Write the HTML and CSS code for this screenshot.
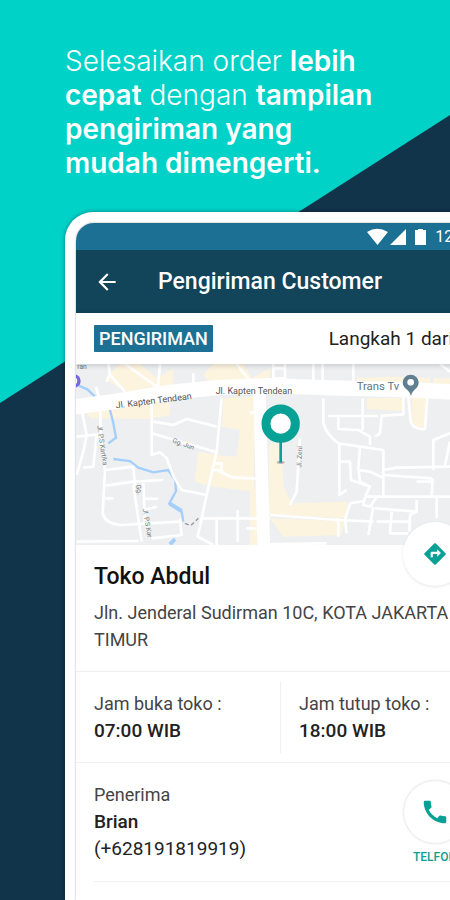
FILE: index.html
```
<!DOCTYPE html>
<html lang="id">
<head>
  <meta charset="UTF-8" />
  <meta name="viewport" content="width=device-width, initial-scale=1.0"/>
  <title>Pengiriman Customer</title>
  <link rel="stylesheet" href="styles.css">
</head>
<body>

  <main class="promo">
    <div class="backdrop"></div>

    <h1 class="headline">
      Selesaikan order <strong>lebih<br>cepat</strong> dengan <strong>tampilan<br>pengiriman yang<br>mudah dimengerti.</strong>
    </h1>

    <div class="phone">
      <div class="screen">

        <div class="status-bar">
          <svg class="status-icons" viewBox="0 0 60 18" aria-hidden="true">
            <path d="M0 4 Q10-2.500 21 4 L10.500 17Z"/>
            <path d="M39 1V17H23Z"/>
            <path d="M51 1h5v1h3v15H48V2h3Z"/>
          </svg>
          <span>12:30</span>
        </div>

        <header class="app-bar">
          <button class="back" type="button" aria-label="Kembali">
            <svg viewBox="0 0 24 24"><path d="M20 11H7.830l5.590-5.590L12 4l-8 8 8 8 1.410-1.410L7.830 13H20z"/></svg>
          </button>
          <h2>Pengiriman Customer</h2>
        </header>

        <div class="step-row">
          <span class="badge">PENGIRIMAN</span>
          <span>Langkah 1 dari</span>
        </div>

        <div class="map">
          <svg viewBox="18 27 1302 543" preserveAspectRatio="xMinYMin slice" role="img" aria-label="Peta lokasi toko">
            <rect class="land" x="0" y="0" width="1400" height="600"/>

            <!-- built-up areas -->
            <g class="area">
              <path d="M105 70 150 27H210L262 70 310 40 310 90 170 115Z"/>
              <path d="M50 170 240 140 300 145V180L240 192 60 190Z"/>
              <path d="M430 27H520L545 70 600 40V85L420 88 400 60Z"/>
              <path d="M462 130 552 125V375L435 350 430 395 375 380 385 290 440 300 500 305 510 225 455 215Z"/>
              <path d="M435 350 552 372V410L430 395Z"/>
              <path d="M540 400h22v170h-22z"/>
              <path d="M598 265h35l8 130 25 50 165-5v50l-235-12Z"/>
              <path d="M600 490 825 498 815 540 640 545Z"/>
              <path d="M860 70 960 65 1080 68V100L860 105Z"/>
              <path d="M890 130 1000 128V168L890 162Z"/>
              <path d="M1025 120h45v100l-28 5-17-30Z"/>
              <path d="M1090 70h230v50h-230z"/>
            </g>

            <!-- river -->
            <g class="river">
              <path d="M26 92 52 103 75 125M120 165 130 205 138 248 115 265M130 312 180 318 205 338 250 352 295 345 315 375 318 408 298 445 335 470 340 500"/>
              <path class="wide" d="M298 445 335 468M300 568 315 552"/>
            </g>

            <!-- small streets -->
            <g class="street">
              <path d="M78 95 90 140 92 240 105 350 98 475Q105 505 150 510L330 500M35 165 50 240 40 290 20 360M20 245 85 238M80 240 70 335 40 338"/>
              <path d="M245 130V300L270 292 290 310 312 368 335 405 410 420M250 200 310 210 350 192 440 215M245 235 440 292M270 27 262 120"/>
              <path d="M115 27 120 60 165 110M165 27 260 95M110 80 120 55M370 55V90M500 27 545 85"/>
              <path d="M455 130 440 290 410 420 383 545 430 570M440 345 490 368 552 370M430 325h25v20h-25M395 490H555M440 490V570M503 465V560"/>
              <path d="M108 345 190 335 195 390M108 392 190 380 280 375M105 430h25M220 385 225 510M225 430 265 432M225 465 260 455M20 560 205 558M190 390 215 560M245 550 335 540 330 490"/>
              <path d="M540 490h60M530 520h30M540 175 552 170"/>
            </g>

            <g class="street" transform="translate(540 0)">
              <path d="M70 27v50M105 27v50M70 40h35M70 70h35M190 27v60M218 27v58M310 27v55M570 27 600 50"/>
              <path d="M220 130V205Q230 240 265 265L400 285V425M235 183H385M265 183V222L325 225 360 245V270M338 130V225"/>
              <path d="M460 125V178L395 182 390 235 375 245M475 125 482 200Q490 225 525 222L532 130"/>
              <path d="M268 268V420L290 405M330 272 325 340 330 380 360 395 345 425M268 320H300L303 375 360 395M325 345 360 350 398 368"/>
              <path d="M400 345 440 338 600 335M400 360 545 370M548 370 545 425M550 345V255L600 235M600 260 585 330M500 380h45"/>
              <path d="M345 425H760M345 425 340 450 360 455 380 425M300 445 340 438M300 445 285 495 290 535M370 455 355 540M375 460 500 470M500 435 500 470 480 480 478 530M425 470 420 535 475 535M380 500H480M560 425V490"/>
              <path d="M150 250 140 410 120 450M60 480 265 495 370 500M0 370H30M265 490V545M60 567 230 565"/>
            </g>

            <!-- main roads -->
            <path class="road" d="M0 158 130 140 300 112 440 98 600 92 760 98 1000 104 1320 118"/>
            <path class="road wide-road" d="M568 100 575 350 582 600"/>
            <path class="rail" d="M345 505 362 512 385 490"/>
            <circle class="poi" cx="12" cy="78" r="20"/>
            <circle class="pin-hole" cx="12" cy="78" r="10"/>

            <g class="street-name">
              <text class="minor" x="22" y="42">ran</text>
              <text transform="translate(138 160) rotate(-7)">Jl. Kapten Tendean</text>
              <text x="437" y="116">Jl. Kapten Tendean</text>
              <text class="minor" transform="translate(82 212) rotate(82)">Jl. P.S Kartika</text>
              <text class="minor" transform="translate(198 390) rotate(80)">Gg.</text>
              <text class="minor" transform="translate(218 462) rotate(80)">Jl. P.S Kar</text>
              <text class="minor" transform="translate(306 262) rotate(20)">Gg. Jun</text>
              <text class="minor" transform="translate(694 338) rotate(-88)">Jl. Zeni</text>
              <text class="place" x="860" y="105">Trans Tv</text>
            </g>

            <!-- Trans Tv pin -->
            <path class="pin-small" d="M1023 123C1018 102 998 102 998 82a24 23 0 0 1 48 0C1046 102 1028 102 1023 123Z"/>
            <circle class="pin-hole" cx="1022" cy="82" r="10"/>

            <!-- store marker -->
            <ellipse class="pin-shadow" cx="632" cy="322" rx="12" ry="5"/>
            <path class="pin-stem" d="M632 255V323"/>
            <circle class="pin" cx="632" cy="206" r="44"/>
          </svg>
          <button class="round directions" type="button" aria-label="Petunjuk arah">
            <svg viewBox="0 0 24 24"><path d="M21.710 11.290l-9-9a1 1 0 0 0-1.410 0l-9 9a1 1 0 0 0 0 1.410l9 9c.390.390 1.020.390 1.410 0l9-9a1 1 0 0 0 0-1.410zM14 14.500V12h-4v3H8v-4c0-.550.450-1 1-1h5V7.500l3.500 3.500-3.500 3.500z"/></svg>
          </button>
        </div>

        <section class="store">
          <h3>Toko Abdul</h3>
          <p>Jln. Jenderal Sudirman 10C, KOTA JAKARTA TIMUR</p>
        </section>

        <section class="hours">
          <div>
            <p>Jam buka toko :</p>
            <p class="value">07:00 WIB</p>
          </div>
          <div>
            <p>Jam tutup toko :</p>
            <p class="value">18:00 WIB</p>
          </div>
        </section>

        <section class="receiver">
          <div>
            <p>Penerima</p>
            <p class="value">Brian</p>
            <p class="number">(+628191819919)</p>
          </div>
          <a class="call" href="tel:+628191819919">
            <span class="round">
              <svg viewBox="0 0 24 24"><path d="M20.010 15.380c-1.230 0-2.420-.200-3.530-.560a.977.977 0 0 0-1.010.240l-1.570 1.970c-2.830-1.350-5.480-3.900-6.890-6.830l1.950-1.660c.270-.280.350-.670.240-1.020-.370-1.110-.560-2.300-.560-3.530 0-.540-.450-.990-.990-.990H4.190C3.650 3 3 3.240 3 3.990 3 13.280 10.730 21 20.010 21c.710 0 .990-.630.990-1.180v-3.450c0-.540-.450-.990-.990-.990z"/></svg>
            </span>
            TELFON
          </a>
        </section>

      </div>
    </div>
  </main>

</body>
</html>
```

FILE: styles.css
```
* {
  box-sizing: border-box;
}

body {
  margin: 0;
  background: #12344b;
  color: #444;
  font-family: Roboto, sans-serif;
  font-size: 18px;
  line-height: 27px;
}

h1, h2, h3, p {
  margin: 0;
}

button {
  padding: 0;
  border: 0;
  background: none;
  cursor: pointer;
}

.promo {
  position: relative;
  display: flex;
  flex-direction: column;
  min-height: 100vh;
  padding: 44px 0 0 65px;
  overflow: hidden;
}

.backdrop {
  position: absolute;
  inset: 0;
  background: #00d2c8;
  clip-path: polygon(0 0, 100% 0, 100% 115px, 0 403px);
}

.headline {
  position: relative;
  color: #fff;
  font-family: Inter, sans-serif;
  font-size: 28px;
  font-weight: 300;
  line-height: 34px;
}

.headline strong {
  font-weight: 600;
}

/* the phone runs off the right and bottom edges */
.phone {
  position: relative;
  display: flex;
  flex: 1;
  margin: 32px -60px 0 0;
  padding: 11px 11px 0;
  border-radius: 28px 28px 0 0;
  background: #fff;
  box-shadow: 0 0 4px rgba(0, 0, 0, 0.4);
}

.screen {
  flex: 1;
  border-radius: 18px 18px 0 0;
  background: #fff;
  box-shadow: 0 0 2px rgba(0, 0, 0, 0.4);
  overflow: hidden;
}

.status-bar {
  display: flex;
  align-items: center;
  justify-content: flex-end;
  gap: 8px;
  height: 27px;
  padding-right: 24px;
  background: #1b7094;
  color: #fff;
  font-size: 16px;
}

.status-icons {
  width: 60px;
  height: 18px;
  fill: #fff;
}

.app-bar {
  display: flex;
  align-items: center;
  gap: 38px;
  height: 63px;
  padding: 0 18px;
  background: #12445a;
  color: #fff;
}

.app-bar h2 {
  font-size: 23px;
  font-weight: 500;
}

.back svg {
  display: block;
  width: 26px;
  height: 26px;
  fill: #fff;
}

.step-row {
  position: relative;
  z-index: 1;
  display: flex;
  align-items: center;
  justify-content: space-between;
  height: 51px;
  padding: 0 46px 0 18px;
  box-shadow: 0 1px 6px rgba(0, 0, 0, 0.2);
  color: #222;
  font-size: 19px;
}

.badge {
  padding: 0 5px;
  border-radius: 1px;
  background: #1b7094;
  color: #fff;
  font-size: 18px;
  font-weight: 500;
}

.map {
  position: relative;
}

.map > svg {
  display: block;
  width: 100%;
  height: 181px;
}

.land { fill: #edeff1; }
.area { fill: #fcf4df; }
.river { fill: none; stroke: #a5cffa; stroke-width: 7; }
.river .wide { stroke-width: 12; }
.street { fill: none; stroke: #fff; stroke-width: 8; stroke-linejoin: round; }
.road { fill: none; stroke: #fff; stroke-width: 46; }
.wide-road { stroke-width: 38; }
.rail { fill: none; stroke: #999; stroke-width: 4; stroke-dasharray: 12 8; }
.poi { fill: #7568d8; }
.street-name { fill: #555; font-size: 27px; }
.street-name .minor { fill: #777; font-size: 20px; }
.street-name .place { fill: #5f7485; font-size: 34px; }
.pin-small { fill: #607f92; }
.pin-hole { fill: #fff; }
.pin { fill: #fff; stroke: #08a196; stroke-width: 27; }
.pin-stem { stroke: #08a196; stroke-width: 8; }
.pin-shadow { fill: #b5b8b5; }

.round {
  display: flex;
  align-items: center;
  justify-content: center;
  width: 62px;
  height: 62px;
  border-radius: 50%;
  background: #fff;
  box-shadow: 0 0 3px rgba(0, 0, 0, 0.2);
}

.round svg {
  width: 30px;
  height: 30px;
  fill: #08a196;
}

.directions {
  position: absolute;
  right: 32px;
  bottom: -41px;
  width: 64px;
  height: 64px;
  box-shadow: 0 1px 3px rgba(0, 0, 0, 0.1);
}

.directions svg {
  width: 26px;
  height: 26px;
}

.store {
  padding: 18px;
  border-bottom: 1px solid #f0f0f0;
}

.store h3 {
  margin-bottom: 9px;
  color: #111;
  font-size: 23px;
  font-weight: 500;
}

.hours {
  display: flex;
  padding: 9px 0;
  border-bottom: 1px solid #f0f0f0;
}

.hours div {
  flex: 1;
  padding: 9px 18px;
}

.hours div:first-child {
  flex: 0 0 205px;
  border-right: 1px solid #f0f0f0;
}

.value {
  color: #222;
  font-size: 19px;
  font-weight: 500;
}

.receiver {
  display: flex;
  justify-content: space-between;
  margin-left: 18px;
  padding: 18px 33px 16px 0;
  border-bottom: 1px solid #f0f0f0;
}

.number {
  color: #222;
  font-size: 19px;
}

.call {
  display: flex;
  flex-direction: column;
  align-items: center;
  gap: 6px;
  color: #08a196;
  font-size: 12px;
  font-weight: 500;
  line-height: 16px;
  text-decoration: none;
}
```
